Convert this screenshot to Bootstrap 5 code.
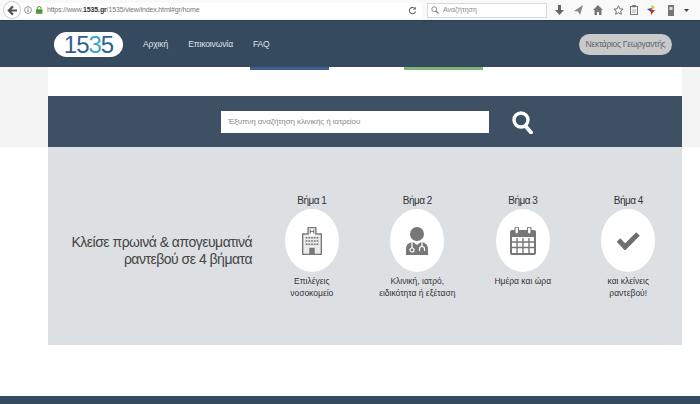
<!DOCTYPE html>
<html lang="el">
<head>
<meta charset="utf-8">
<title>1535</title>
<link rel="stylesheet" href="https://cdn.jsdelivr.net/npm/bootstrap@5.3.0/dist/css/bootstrap.min.css">
<style>
html,body{height:404px;overflow:hidden}
body{font-family:"Liberation Sans",Arial,sans-serif;background:#fff;color:#333;width:700px}
.chrome-bar{height:20px;background:#f9f9f9;padding:0 6px 0 3px;color:#666;font-size:7px}
.back-btn{width:18px;height:18px;border:1px solid #cfcfcf;background:#fff;color:#555;flex:none}
.url-box{width:401px;height:15px;background:#fff;padding:0 5px 0 3px;flex:none}
.url-box b{color:#333}
.url-text{letter-spacing:-.14px;color:#777;margin-left:4px}
.find-box{width:120px;height:15px;background:#fff;border:1px solid #d4dbe6;margin-left:5px;padding-left:3px;color:#888;flex:none}
.tools{margin-left:8px;gap:10px;color:#777}
.tool-clip{margin-left:-4px}
.tool-swatch{margin-left:-1px;margin-right:1px}
.tool-caret{margin-left:-1px}
.site-nav{height:47px;background:#364a5f;border-top:1px solid #2b3e50;padding:0 0 0 54px;position:relative}
.logo-pill{width:69px;height:25px;background:#fff;border-radius:13px;font-family:"Liberation Sans",sans-serif;font-size:24px;line-height:25px;letter-spacing:-1px;color:#2f5f96;text-align:center}
.logo-pill i{font-style:normal;color:#3aa6c8}
.menu-link{color:#dfe4e8;font-size:8.5px;letter-spacing:-.12px;text-decoration:none}
.menu-row{margin-left:20px;gap:20px}
.user-pill{position:absolute;right:28px;top:13px;width:93px;height:21px;border-radius:11px;background:#c9c9c9;color:#59636c;font-size:8.5px;letter-spacing:-.3px;line-height:21px;text-align:center;white-space:nowrap}
.page-band{height:80px;display:flex;background:linear-gradient(#f3f3f3,#f3f3f3) left/48px 100% no-repeat,linear-gradient(#f3f3f3,#f3f3f3) right/18px 100% no-repeat}
.tab-stub{height:3px;width:79px;position:absolute;top:67px}
.stub-blue{left:250px;background:#3d5f94}
.stub-green{left:404px;background:#82b678}
.search-panel{margin:29px 18px 0 48px;height:51px;background:#3d5064;flex:1;gap:23px;padding-left:173px}
.search-field{width:268px;height:22px;background:#fff;font-size:8px;letter-spacing:-.1px;padding:0 7px;color:#8a8a8a;display:flex;align-items:center;flex:none}
.steps-panel{margin-left:48px;margin-right:18px;height:198px;background:#dde0e3}
.steps-title{width:204px;padding-top:87px;text-align:right;font-size:14px;letter-spacing:-.5px;line-height:16.500px;color:#444;flex:none}
.step-col{width:105.5px;text-align:center;flex:none;color:#333;font-size:8.5px;line-height:12px;padding-top:48px}
.step-name{font-size:10px;letter-spacing:-.55px;line-height:12px;margin-bottom:2px}
.step-disc{width:54px;height:63px;border-radius:50%;background:#fff;margin:0 auto 3px;display:flex;align-items:center;justify-content:center}
.steps-list{margin-left:7px}
.foot-band{position:absolute;left:0;right:0;top:396px;height:8px;background:#364a5f}
</style>
</head>
<body>
<div class="chrome-bar d-flex align-items-center">
  <div class="back-btn rounded-circle d-flex align-items-center justify-content-center">
    <svg width="11" height="11" viewBox="0 0 12 12"><path d="M6.500 1.500 2 6l4.500 4.500M2.500 6H11" fill="none" stroke="#555" stroke-width="2.400"/></svg>
  </div>
  <div class="url-box d-flex align-items-center">
    <svg width="8" height="8" viewBox="0 0 8 8"><circle cx="4" cy="4" r="3.400" fill="none" stroke="#777" stroke-width=".8"/><path d="M4 3.400v2.600M4 1.800v.9" stroke="#777"/></svg>
    <svg class="ms-1" width="7" height="8" viewBox="0 0 7 8"><rect y="3.300" width="6.400" height="4.500" fill="#4a9a2d"/><path d="M1.400 3.500V2.300a1.800 1.800 0 0 1 3.600 0v1.200" fill="none" stroke="#4a9a2d"/></svg>
    <span class="url-text">https://www.<b>1535.gr</b>/1535/view/index.html#gr/home</span>
    <svg class="ms-auto" width="9" height="9" viewBox="0 0 10 10"><path d="M8 3.200A3.500 3.500 0 1 0 8.400 6" fill="none" stroke="#666" stroke-width="1.200"/><path d="M8.600 .8v3.200H5.400z" fill="#666"/></svg>
  </div>
  <div class="find-box d-flex align-items-center">
    <svg width="8" height="8" viewBox="0 0 8 8"><circle cx="3.200" cy="3.200" r="2.400" fill="none" stroke="#888"/><path d="M5 5l2.500 2.500" stroke="#888" stroke-width="1.200"/></svg>
    <span class="ms-1">Αναζήτηση</span>
  </div>
  <div class="tools d-flex align-items-center">
    <svg width="9" height="10" viewBox="0 0 9 10"><path d="M3 0h3v5h3L4.500 10 0 5h3z" fill="#666"/></svg>
    <svg width="9" height="10" viewBox="0 0 9 10"><path d="M9 0 0 6l4 .5L6 10z" fill="#888"/></svg>
    <svg width="10" height="10" viewBox="0 0 10 10"><path d="M5 0 0 5h1.500v5h2.500V7h2v3h2.500V5H10z" fill="#777"/></svg>
    <svg width="11" height="10" viewBox="0 0 11 10"><path d="m5.500.8 1.400 3 3.200.3-2.400 2.100.7 3.100-2.900-1.600-2.900 1.600.7-3.100L.9 4.100l3.200-.3z" fill="none" stroke="#666" stroke-width=".9"/></svg>
    <svg class="tool-clip" width="8" height="10" viewBox="0 0 8 10"><rect x=".5" y="1.500" width="7" height="8" fill="none" stroke="#777"/><path d="M2.500 0h3v2h-3zM2 5h4M2 7h4" fill="#777" stroke="#777" stroke-width=".6"/></svg>
    <svg class="tool-swatch" width="9" height="10" viewBox="0 0 9 10"><path d="M4 0 8 2 5 5z" fill="#e8c51e"/><path d="M0 4 5 3 4 7z" fill="#2d55b5"/><path d="M4 5 8 5 4 10z" fill="#d8262c"/></svg>
    <svg width="8" height="11" viewBox="0 0 8 11"><rect x="1" y="0" width="6" height="11" fill="#777"/><rect x="2.500" y="2" width="3" height="3" fill="#ddd"/></svg>
    <svg class="tool-caret" width="5" height="3" viewBox="0 0 5 3"><path d="M0 0h5L2.500 3z" fill="#444"/></svg>
  </div>
</div>
<nav class="site-nav d-flex align-items-center">
  <div class="logo-pill">15<i>3</i>5</div>
  <div class="menu-row d-flex">
    <a class="menu-link" href="#">Αρχική</a>
    <a class="menu-link" href="#">Επικοινωνία</a>
    <a class="menu-link" href="#">FAQ</a>
  </div>
  <div class="user-pill">Νεκτάριος Γεωργαντής</div>
</nav>
<div class="tab-stub stub-blue"></div>
<div class="tab-stub stub-green"></div>
<div class="page-band">
  <div class="search-panel d-flex align-items-center">
    <div class="search-field">Έξυπνη αναζήτηση κλινικής ή ιατρείου</div>
    <svg width="21" height="24" viewBox="0 0 21 24"><circle cx="9" cy="10" r="7" fill="none" stroke="#fff" stroke-width="3.400"/><path d="m13.500 16 5.500 6.500" stroke="#fff" stroke-width="3.800" stroke-linecap="round"/></svg>
  </div>
</div>
<div class="steps-panel d-flex">
  <div class="steps-title">Κλείσε πρωινά &amp; απογευματινά ραντεβού σε 4 βήματα</div>
  <div class="steps-list d-flex">
    <div class="step-col">
      <div class="step-name">Βήμα 1</div>
      <div class="step-disc">
        <svg width="20" height="30" viewBox="0 0 22 31"><path d="M6 0h10v7h6v24H0V7h6z" fill="#777"/><rect x="1.500" y="8.500" width="19" height="21" fill="#fff" opacity=".85"/><path d="M7.500 1.500h7v8h-7z" fill="#fff"/><path d="M9 2.500v5M13 2.500v5M9 5h4" stroke="#777" stroke-width="1.200"/><path d="M4 12h14M4 15.500h14M4 19h14" stroke="#777" stroke-width="1.600" stroke-dasharray="2 1"/><rect x="8" y="23" width="6" height="7" fill="#777"/></svg>
      </div>
      <div>Επιλέγεις<br>νοσοκομείο</div>
    </div>
    <div class="step-col">
      <div class="step-name">Βήμα 2</div>
      <div class="step-disc">
        <svg width="24" height="28" viewBox="0 0 24 28"><circle cx="12" cy="7" r="7" fill="#777"/><path d="M1 28v-6c0-5 4-7 7-7l4 3 4-3c3 0 7 2 7 7v6z" fill="#777"/><path d="M7 15v6M17 15v4" stroke="#fff" stroke-width="1.300" fill="none"/><circle cx="7" cy="23" r="2" fill="none" stroke="#fff" stroke-width="1.200"/><path d="M14.500 24v-2a2.500 2.500 0 0 1 5 0v2" fill="none" stroke="#fff" stroke-width="1.200"/></svg>
      </div>
      <div>Κλινική, ιατρό,<br>ειδικότητα ή εξέταση</div>
    </div>
    <div class="step-col">
      <div class="step-name">Βήμα 3</div>
      <div class="step-disc">
        <svg width="26" height="28" viewBox="0 0 26 28"><rect y="3" width="26" height="25" rx="2" fill="#777"/><path d="M2 10h22v16H2z" fill="#fff"/><path d="M7 11v15M13 11v15M19 11v15M2 15h22M2 20.500h22" stroke="#777" stroke-width="1.400"/><rect x="5" y="0" width="3.500" height="7" rx="1.700" fill="#fff" stroke="#777" stroke-width="1.100"/><rect x="17.500" y="0" width="3.500" height="7" rx="1.700" fill="#fff" stroke="#777" stroke-width="1.100"/></svg>
      </div>
      <div>Ημέρα και ώρα</div>
    </div>
    <div class="step-col">
      <div class="step-name">Βήμα 4</div>
      <div class="step-disc">
        <svg width="24" height="19" viewBox="0 0 24 19"><path d="m2.500 9 6.500 7L22 3" fill="none" stroke="#6f6f6f" stroke-width="5"/></svg>
      </div>
      <div>και κλείνεις<br>ραντεβού!</div>
    </div>
  </div>
</div>
<div class="foot-band"></div>
<script src="https://cdn.jsdelivr.net/npm/bootstrap@5.3.0/dist/js/bootstrap.bundle.min.js"></script>
</body>
</html>
